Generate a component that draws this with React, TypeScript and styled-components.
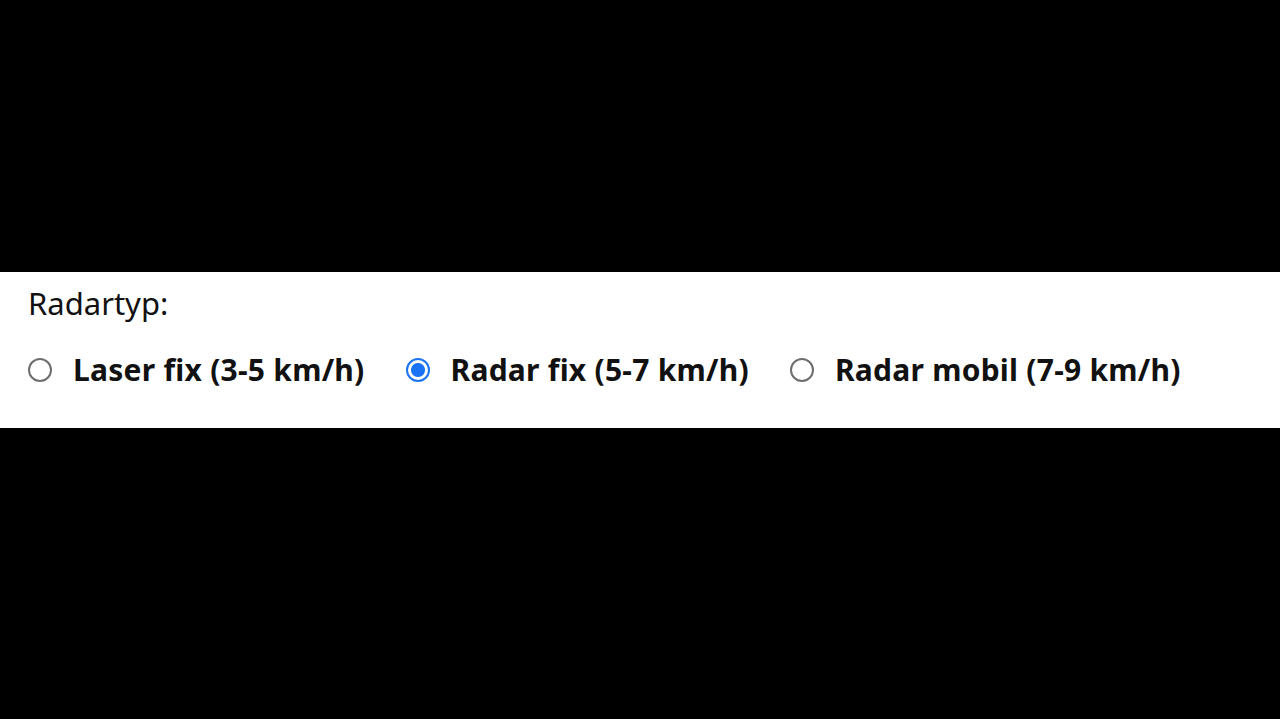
import React, { useState } from 'react';
import styled, { createGlobalStyle } from 'styled-components';

const GlobalStyle = createGlobalStyle`
  html, body {
    margin: 0;
    padding: 0;
    background: #000;
  }
  body {
    font-family: "Noto Sans", "Open Sans", sans-serif;
  }
`;

const Page = styled.div`
  min-height: 719px;
  padding-top: 272px;
  box-sizing: border-box;
  background: #000;
`;

const Band = styled.fieldset`
  margin: 0;
  border: none;
  background: #fff;
  height: 156px;
  box-sizing: border-box;
  padding: 10px 28px 0 28px;
`;

const Legend = styled.div`
  font-size: 31px;
  color: #111;
  line-height: 42px;
`;

const Options = styled.div`
  display: flex;
  align-items: center;
  gap: 41px;
  margin-top: 26px;
`;

const Option = styled.label`
  display: flex;
  align-items: center;
  gap: 21px;
  cursor: pointer;
`;

const Radio = styled.input`
  appearance: none;
  margin: 0;
  width: 24px;
  height: 24px;
  border-radius: 50%;
  border: 2px solid #6e6e6e;
  box-sizing: border-box;
  background: #fff;
  flex-shrink: 0;
  &:checked {
    border-color: #1a73f5;
    background: radial-gradient(circle, #1a73f5 0 6.5px, #fff 7.5px);
  }
`;

const Text = styled.span`
  font-size: 30px;
  font-weight: 700;
  line-height: 40px;
  color: #111;
  letter-spacing: 0.25px;
`;

const types = [
  { id: 'laser', label: 'Laser fix (3-5 km/h)' },
  { id: 'radar', label: 'Radar fix (5-7 km/h)' },
  { id: 'mobil', label: 'Radar mobil (7-9 km/h)' },
];

export default function App() {
  const [value, setValue] = useState('radar');
  return (
    <>
      <GlobalStyle />
      <Page>
        <Band>
          <Legend>Radartyp:</Legend>
          <Options>
            {types.map((t) => (
              <Option key={t.id}>
                <Radio
                  type="radio"
                  name="radartyp"
                  checked={value === t.id}
                  onChange={() => setValue(t.id)}
                />
                <Text>{t.label}</Text>
              </Option>
            ))}
          </Options>
        </Band>
      </Page>
    </>
  );
}
